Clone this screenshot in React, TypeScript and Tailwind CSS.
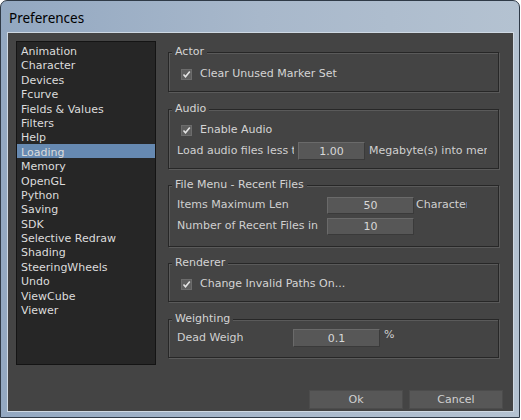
import type { ReactNode } from "react";

const categories = [
  "Animation",
  "Character",
  "Devices",
  "Fcurve",
  "Fields & Values",
  "Filters",
  "Help",
  "Loading",
  "Memory",
  "OpenGL",
  "Python",
  "Saving",
  "SDK",
  "Selective Redraw",
  "Shading",
  "SteeringWheels",
  "Undo",
  "ViewCube",
  "Viewer",
];

function GroupBox({ title, className, children }: { title: string; className: string; children: ReactNode }) {
  return (
    <div
      className={`relative border border-[#272727] shadow-[1px_1px_0_#5a5a5a,inset_1px_1px_0_#5a5a5a] ${className}`}
    >
      <span className="absolute -top-[8px] left-[3px] bg-[#444444] px-[3px] leading-[14px] text-[#d4d4d4]">
        {title}
      </span>
      {children}
    </div>
  );
}

function CheckRow({ label }: { label: string }) {
  return (
    <div className="flex h-[14px] items-center pl-[12px]">
      <span className="flex h-[11px] w-[11px] items-center justify-center border border-[#6c6c6c] bg-[#5e5e5e]">
        <svg width="9" height="9" viewBox="0 0 9 9">
          <path d="M1.5 4.5 L3.5 6.7 L7.8 1.6" fill="none" stroke="#e4e4e4" strokeWidth="1.6" />
        </svg>
      </span>
      <span className="ml-[8px] leading-[14px] text-[#d4d4d4]">{label}</span>
    </div>
  );
}

function Field({ value, w, h }: { value: string; w: string; h: string }) {
  return (
    <div
      className={`${w} ${h} flex shrink-0 items-end justify-center border-t border-l border-[#6a6a6a] border-b border-r border-b-[#3a3a3a] border-r-[#3a3a3a] bg-[#575757] leading-[14px] text-[#d8d8d8]`}
    >
      {value}
    </div>
  );
}

export default function App() {
  return (
    <div className="relative h-[420px] w-[521px] overflow-hidden bg-white">
      <div
        className="h-[418px] w-[520px] rounded-t-[7px] border border-[#2f3a47] bg-gradient-to-r from-[#93a8c1] via-[#a8b8cb] to-[#b4c2d1] px-[6px] pt-[31px]"
        style={{ fontFamily: '"DejaVu Sans", sans-serif' }}
      >
        <div
          className="absolute left-[9px] top-[8px] text-[13.5px] leading-[20px] text-black"
          style={{ fontFamily: '"Noto Sans", sans-serif' }}
        >
          Preferences
        </div>
        <div className="h-[380px] w-[507px] border border-[#cfd9e3] bg-[#444444] text-[11px]">
          <div className="flex pl-[8px] pt-[8px]">
            <div className="h-[324px] w-[140px] border border-[#141414] bg-[#262626] pt-[1px] text-[#dcdcdc]">
              {categories.map((c) => (
                <div
                  key={c}
                  className={`h-[14.4px] pl-[4px] leading-[14.4px] ${c === "Loading" ? "bg-[#6689b1]" : ""}`}
                >
                  <span className="relative top-[2px]">{c}</span>
                </div>
              ))}
            </div>
            <div className="ml-[12px] mt-[11px] flex w-[331px] flex-col text-[#d0d0d0]">
              <GroupBox title="Actor" className="h-[40px] pt-[14px]">
                <CheckRow label="Clear Unused Marker Set" />
              </GroupBox>

              <GroupBox title="Audio" className="mt-[17px] h-[60px] pt-[13px]">
                <CheckRow label="Enable Audio" />
                <div className="mt-[5px] flex h-[18px] items-center pl-[8px]">
                  <span className="w-[117px] overflow-hidden whitespace-nowrap">Load audio files less than</span>
                  <span className="ml-[4px]">
                    <Field value="1.00" w="w-[67px]" h="h-[18px]" />
                  </span>
                  <span className="ml-[4px] w-[118px] overflow-hidden whitespace-nowrap">Megabyte(s) into memory</span>
                </div>
              </GroupBox>

              <GroupBox title="File Menu - Recent Files" className="mt-[16px] h-[62px] pt-[11px]">
                <div className="flex h-[17px] items-center pl-[8px]">
                  <span className="w-[150px]">
                    <span className="block w-[112px] overflow-hidden whitespace-nowrap">Items Maximum Length</span>
                  </span>
                  <Field value="50" w="w-[87px]" h="h-[17px]" />
                  <span className="ml-[2px] w-[51px] overflow-hidden whitespace-nowrap">Characters</span>
                </div>
                <div className="mt-[4px] flex h-[17px] items-center pl-[8px]">
                  <span className="w-[150px] overflow-hidden whitespace-nowrap">Number of Recent Files in</span>
                  <Field value="10" w="w-[87px]" h="h-[17px]" />
                </div>
              </GroupBox>

              <GroupBox title="Renderer" className="mt-[16px] h-[39px] pt-[13px]">
                <CheckRow label="Change Invalid Paths On..." />
              </GroupBox>

              <GroupBox title="Weighting" className="mt-[17px] h-[39px] pt-[9px]">
                <div className="flex h-[18px] items-center pl-[8px]">
                  <span className="w-[116px]">
                    <span className="block w-[66px] overflow-hidden whitespace-nowrap">Dead Weight</span>
                  </span>
                  <Field value="0.1" w="w-[87px]" h="h-[18px]" />
                  <span className="ml-[4px] self-start leading-[12px]">%</span>
                </div>
              </GroupBox>
            </div>
          </div>
          <div className="mt-[25px] flex justify-end gap-[6px] pr-[10px]">
            <button className="h-[19px] w-[94px] border border-[#4c4c4c] bg-[#575757] leading-[17px] text-[#d0d0d0]">
              Ok
            </button>
            <button className="h-[19px] w-[94px] border border-[#4c4c4c] bg-[#575757] leading-[17px] text-[#d0d0d0]">
              Cancel
            </button>
          </div>
        </div>
      </div>
    </div>
  );
}
